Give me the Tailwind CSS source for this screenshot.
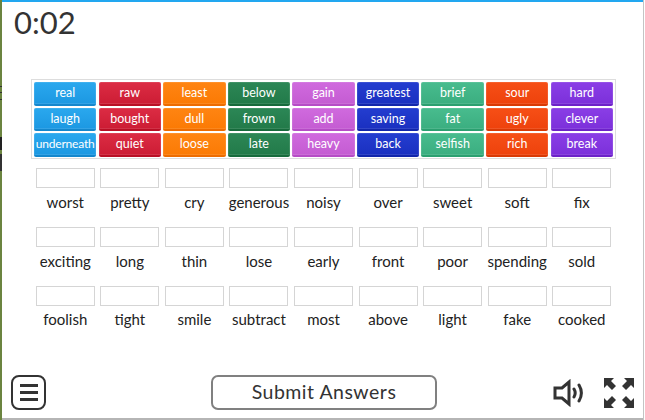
<!DOCTYPE html>
<html lang="en">
<head>
  <meta charset="UTF-8" />
  <title>Opposites Quiz</title>
  <script src="https://cdn.jsdelivr.net/npm/@tailwindcss/browser@4"></script>
</head>
<body class="bg-white">
  <div class="w-[645px] h-[420px] overflow-hidden relative flex flex-col font-['Lato','Inter',sans-serif] text-[#222]">
    <!-- Edges of the page behind the game -->
    <div class="absolute left-0 top-0 bottom-0 w-[2px] bg-[#6b8440]"></div>
    <div class="absolute left-0 top-[86px] w-[2px] h-px bg-[#333]"></div>
    <div class="absolute left-0 top-[92px] w-[2px] h-px bg-[#333]"></div>
    <div class="absolute left-0 top-[99px] w-[2px] h-px bg-[#333]"></div>
    <div class="absolute left-0 top-[137px] w-[2px] h-[13px] bg-[#222]"></div>
    <div class="absolute left-0 top-[154px] w-[2px] h-[17px] bg-[#333]"></div>
    <div class="absolute left-[2px] right-[2px] top-0 h-[2px] bg-[#22a7f0]"></div>
    <div class="absolute left-[2px] right-[2px] bottom-0 h-[2px] bg-[#b5b5b5]"></div>
    <div class="absolute right-[1px] top-0 bottom-0 w-px bg-[#c4c4c4]"></div>

    <div class="h-[46px] pl-[14px] pt-[3px] text-[31px] leading-[38px] text-[#333]">0:02</div>

    <!-- Word bank -->
    <div class="ml-[31px] mt-[33px] w-[585px] h-[80px] border border-[#ddd] px-[2px] pt-[2px] grid grid-cols-9 grid-rows-[24px_23px_24px] gap-x-[2.2px] gap-y-[2px] text-[12.5px] leading-[21px] text-white text-center">
      <div class="rounded-[2px] bg-linear-to-b from-[#2aa8ee] to-[#1c98e2] border-b-2 border-[#1487cd] shadow-[inset_0_0_0_1px_rgba(255,255,255,0.1)]">real</div>
      <div class="rounded-[2px] bg-linear-to-b from-[#dc2c44] to-[#cc1c34] border-b-2 border-[#b90f25] shadow-[inset_0_0_0_1px_rgba(255,255,255,0.1)]">raw</div>
      <div class="rounded-[2px] bg-linear-to-b from-[#ff8512] to-[#fb7a04] border-b-2 border-[#ed6c00] shadow-[inset_0_0_0_1px_rgba(255,255,255,0.1)]">least</div>
      <div class="rounded-[2px] bg-linear-to-b from-[#2c8756] to-[#227a49] border-b-2 border-[#176b3c] shadow-[inset_0_0_0_1px_rgba(255,255,255,0.1)]">below</div>
      <div class="rounded-[2px] bg-linear-to-b from-[#d06ade] to-[#c45cd2] border-b-2 border-[#b64cc6] shadow-[inset_0_0_0_1px_rgba(255,255,255,0.1)]">gain</div>
      <div class="rounded-[2px] bg-linear-to-b from-[#243dd0] to-[#1a30c0] border-b-2 border-[#1226ab] shadow-[inset_0_0_0_1px_rgba(255,255,255,0.1)]">greatest</div>
      <div class="rounded-[2px] bg-linear-to-b from-[#48bc8e] to-[#3bae80] border-b-2 border-[#2ba070] shadow-[inset_0_0_0_1px_rgba(255,255,255,0.1)]">brief</div>
      <div class="rounded-[2px] bg-linear-to-b from-[#f64f16] to-[#ee420c] border-b-2 border-[#d93a05] shadow-[inset_0_0_0_1px_rgba(255,255,255,0.1)]">sour</div>
      <div class="rounded-[2px] bg-linear-to-b from-[#8a3ee6] to-[#7c30da] border-b-2 border-[#6d22c8] shadow-[inset_0_0_0_1px_rgba(255,255,255,0.1)]">hard</div>

      <div class="rounded-[2px] bg-linear-to-b from-[#2aa8ee] to-[#1c98e2] border-b-2 border-[#1487cd] shadow-[inset_0_0_0_1px_rgba(255,255,255,0.1)]">laugh</div>
      <div class="rounded-[2px] bg-linear-to-b from-[#dc2c44] to-[#cc1c34] border-b-2 border-[#b90f25] shadow-[inset_0_0_0_1px_rgba(255,255,255,0.1)]">bought</div>
      <div class="rounded-[2px] bg-linear-to-b from-[#ff8512] to-[#fb7a04] border-b-2 border-[#ed6c00] shadow-[inset_0_0_0_1px_rgba(255,255,255,0.1)]">dull</div>
      <div class="rounded-[2px] bg-linear-to-b from-[#2c8756] to-[#227a49] border-b-2 border-[#176b3c] shadow-[inset_0_0_0_1px_rgba(255,255,255,0.1)]">frown</div>
      <div class="rounded-[2px] bg-linear-to-b from-[#d06ade] to-[#c45cd2] border-b-2 border-[#b64cc6] shadow-[inset_0_0_0_1px_rgba(255,255,255,0.1)]">add</div>
      <div class="rounded-[2px] bg-linear-to-b from-[#243dd0] to-[#1a30c0] border-b-2 border-[#1226ab] shadow-[inset_0_0_0_1px_rgba(255,255,255,0.1)]">saving</div>
      <div class="rounded-[2px] bg-linear-to-b from-[#48bc8e] to-[#3bae80] border-b-2 border-[#2ba070] shadow-[inset_0_0_0_1px_rgba(255,255,255,0.1)]">fat</div>
      <div class="rounded-[2px] bg-linear-to-b from-[#f64f16] to-[#ee420c] border-b-2 border-[#d93a05] shadow-[inset_0_0_0_1px_rgba(255,255,255,0.1)]">ugly</div>
      <div class="rounded-[2px] bg-linear-to-b from-[#8a3ee6] to-[#7c30da] border-b-2 border-[#6d22c8] shadow-[inset_0_0_0_1px_rgba(255,255,255,0.1)]">clever</div>

      <div class="rounded-[2px] bg-linear-to-b from-[#2aa8ee] to-[#1c98e2] border-b-2 border-[#1487cd] shadow-[inset_0_0_0_1px_rgba(255,255,255,0.1)] text-[12px] tracking-[-0.2px] whitespace-nowrap">underneath</div>
      <div class="rounded-[2px] bg-linear-to-b from-[#dc2c44] to-[#cc1c34] border-b-2 border-[#b90f25] shadow-[inset_0_0_0_1px_rgba(255,255,255,0.1)]">quiet</div>
      <div class="rounded-[2px] bg-linear-to-b from-[#ff8512] to-[#fb7a04] border-b-2 border-[#ed6c00] shadow-[inset_0_0_0_1px_rgba(255,255,255,0.1)]">loose</div>
      <div class="rounded-[2px] bg-linear-to-b from-[#2c8756] to-[#227a49] border-b-2 border-[#176b3c] shadow-[inset_0_0_0_1px_rgba(255,255,255,0.1)]">late</div>
      <div class="rounded-[2px] bg-linear-to-b from-[#d06ade] to-[#c45cd2] border-b-2 border-[#b64cc6] shadow-[inset_0_0_0_1px_rgba(255,255,255,0.1)]">heavy</div>
      <div class="rounded-[2px] bg-linear-to-b from-[#243dd0] to-[#1a30c0] border-b-2 border-[#1226ab] shadow-[inset_0_0_0_1px_rgba(255,255,255,0.1)]">back</div>
      <div class="rounded-[2px] bg-linear-to-b from-[#48bc8e] to-[#3bae80] border-b-2 border-[#2ba070] shadow-[inset_0_0_0_1px_rgba(255,255,255,0.1)]">selfish</div>
      <div class="rounded-[2px] bg-linear-to-b from-[#f64f16] to-[#ee420c] border-b-2 border-[#d93a05] shadow-[inset_0_0_0_1px_rgba(255,255,255,0.1)]">rich</div>
      <div class="rounded-[2px] bg-linear-to-b from-[#8a3ee6] to-[#7c30da] border-b-2 border-[#6d22c8] shadow-[inset_0_0_0_1px_rgba(255,255,255,0.1)]">break</div>
    </div>

    <!-- Answer slots -->
    <div class="ml-[33px] mt-[9px] w-[581px] grid grid-cols-9 gap-y-[13px] text-[15px] text-center">
      <div><div class="mx-auto w-[59px] h-[20px] border border-[#d5d5d5]"></div><div class="mt-[2px] leading-[24px]">worst</div></div>
      <div><div class="mx-auto w-[59px] h-[20px] border border-[#d5d5d5]"></div><div class="mt-[2px] leading-[24px]">pretty</div></div>
      <div><div class="mx-auto w-[59px] h-[20px] border border-[#d5d5d5]"></div><div class="mt-[2px] leading-[24px]">cry</div></div>
      <div><div class="mx-auto w-[59px] h-[20px] border border-[#d5d5d5]"></div><div class="mt-[2px] leading-[24px]">generous</div></div>
      <div><div class="mx-auto w-[59px] h-[20px] border border-[#d5d5d5]"></div><div class="mt-[2px] leading-[24px]">noisy</div></div>
      <div><div class="mx-auto w-[59px] h-[20px] border border-[#d5d5d5]"></div><div class="mt-[2px] leading-[24px]">over</div></div>
      <div><div class="mx-auto w-[59px] h-[20px] border border-[#d5d5d5]"></div><div class="mt-[2px] leading-[24px]">sweet</div></div>
      <div><div class="mx-auto w-[59px] h-[20px] border border-[#d5d5d5]"></div><div class="mt-[2px] leading-[24px]">soft</div></div>
      <div><div class="mx-auto w-[59px] h-[20px] border border-[#d5d5d5]"></div><div class="mt-[2px] leading-[24px]">fix</div></div>

      <div><div class="mx-auto w-[59px] h-[20px] border border-[#d5d5d5]"></div><div class="mt-[2px] leading-[24px]">exciting</div></div>
      <div><div class="mx-auto w-[59px] h-[20px] border border-[#d5d5d5]"></div><div class="mt-[2px] leading-[24px]">long</div></div>
      <div><div class="mx-auto w-[59px] h-[20px] border border-[#d5d5d5]"></div><div class="mt-[2px] leading-[24px]">thin</div></div>
      <div><div class="mx-auto w-[59px] h-[20px] border border-[#d5d5d5]"></div><div class="mt-[2px] leading-[24px]">lose</div></div>
      <div><div class="mx-auto w-[59px] h-[20px] border border-[#d5d5d5]"></div><div class="mt-[2px] leading-[24px]">early</div></div>
      <div><div class="mx-auto w-[59px] h-[20px] border border-[#d5d5d5]"></div><div class="mt-[2px] leading-[24px]">front</div></div>
      <div><div class="mx-auto w-[59px] h-[20px] border border-[#d5d5d5]"></div><div class="mt-[2px] leading-[24px]">poor</div></div>
      <div><div class="mx-auto w-[59px] h-[20px] border border-[#d5d5d5]"></div><div class="mt-[2px] leading-[24px]">spending</div></div>
      <div><div class="mx-auto w-[59px] h-[20px] border border-[#d5d5d5]"></div><div class="mt-[2px] leading-[24px]">sold</div></div>

      <div><div class="mx-auto w-[59px] h-[20px] border border-[#d5d5d5]"></div><div class="mt-px leading-[24px]">foolish</div></div>
      <div><div class="mx-auto w-[59px] h-[20px] border border-[#d5d5d5]"></div><div class="mt-px leading-[24px]">tight</div></div>
      <div><div class="mx-auto w-[59px] h-[20px] border border-[#d5d5d5]"></div><div class="mt-px leading-[24px]">smile</div></div>
      <div><div class="mx-auto w-[59px] h-[20px] border border-[#d5d5d5]"></div><div class="mt-px leading-[24px]">subtract</div></div>
      <div><div class="mx-auto w-[59px] h-[20px] border border-[#d5d5d5]"></div><div class="mt-px leading-[24px]">most</div></div>
      <div><div class="mx-auto w-[59px] h-[20px] border border-[#d5d5d5]"></div><div class="mt-px leading-[24px]">above</div></div>
      <div><div class="mx-auto w-[59px] h-[20px] border border-[#d5d5d5]"></div><div class="mt-px leading-[24px]">light</div></div>
      <div><div class="mx-auto w-[59px] h-[20px] border border-[#d5d5d5]"></div><div class="mt-px leading-[24px]">fake</div></div>
      <div><div class="mx-auto w-[59px] h-[20px] border border-[#d5d5d5]"></div><div class="mt-px leading-[24px]">cooked</div></div>
    </div>

    <!-- Bottom bar -->
    <div class="mt-auto mb-[10px] flex items-center pl-[11px]">
      <div class="shrink-0 w-[35px] h-[35px] rounded-[8px] border-2 border-[#333] flex flex-col items-center justify-center gap-[4px]">
        <span class="block w-[18px] h-[3px] bg-[#333]"></span>
        <span class="block w-[18px] h-[3px] bg-[#333]"></span>
        <span class="block w-[18px] h-[3px] bg-[#333]"></span>
      </div>
      <button class="shrink-0 ml-[165px] w-[226px] h-[35px] pb-[3px] rounded-[7px] border-2 border-[#808080] bg-white text-[19.5px] tracking-[0.5px] text-[#333]">Submit Answers</button>
      <svg class="shrink-0 ml-[116px]" width="32" height="28" viewBox="0 0 32 28" fill="none" stroke="#333" stroke-width="3">
        <path d="M2 9h7l7-6v22l-7-6H2z" />
        <path d="M21 10c1.500 2.500 1.500 5.500 0 8M26 6c3 5 3 11 0 16" stroke-linecap="round" />
      </svg>
      <svg class="shrink-0 ml-[18px]" width="32" height="32" viewBox="0 0 32 32" fill="#333">
        <path d="M1 1h10l-3 3 5 5-4 4-5-5-3 3zM31 1v10l-3-3-5 5-4-4 5-5-3-3zM1 31V21l3 3 5-5 4 4-5 5 3 3zM31 31H21l3-3-5-5 4-4 5 5 3-3z" />
      </svg>
    </div>
  </div>
</body>
</html>
